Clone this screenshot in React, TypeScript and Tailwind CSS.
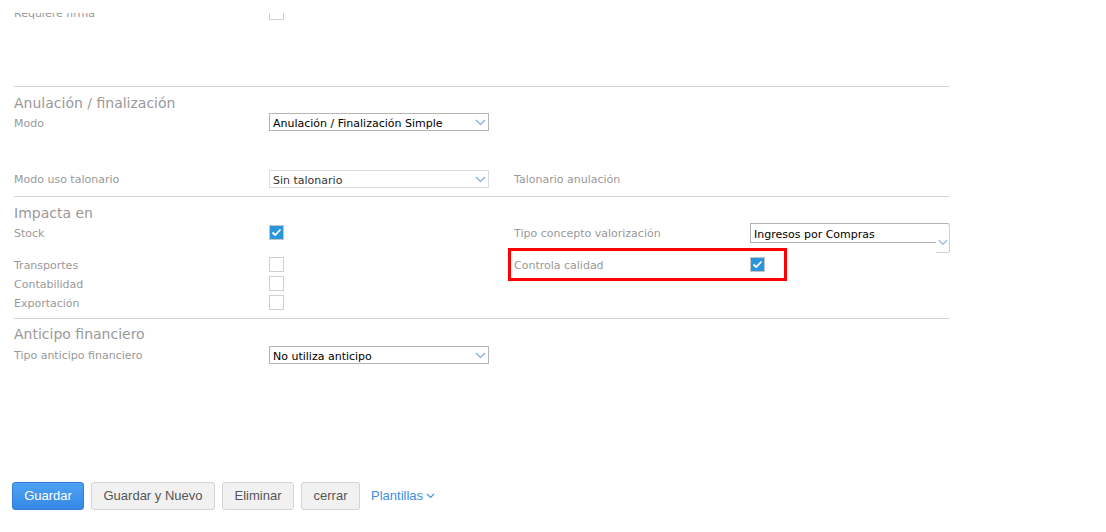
import React from "react";

const font = { fontFamily: '"DejaVu Sans", Verdana, sans-serif' };

function Chevron({ className = "" }: { className?: string }) {
  return (
    <svg width="11" height="7" viewBox="0 0 11 7" className={className}>
      <polyline points="1,1 5.5,5.5 10,1" fill="none" stroke="#7fa9dc" strokeWidth="1.2" />
    </svg>
  );
}

function Select({ value, disabled = false }: { value: string; disabled?: boolean }) {
  return (
    <div
      className={`w-[220px] h-[18px] flex items-center justify-between pl-[3px] pr-[2px] border bg-white ${
        disabled ? "border-[#dcdcdc] text-[#333]" : "border-[#b5b5b5] text-black"
      }`}
    >
      <span className="text-[11px] leading-none pt-[2px]">{value}</span>
      <Chevron />
    </div>
  );
}

function Box({ checked = false }: { checked?: boolean }) {
  return checked ? (
    <div className="w-[15px] h-[15px] border border-[#c5c5c5] bg-[#2b95d9] flex items-center justify-center">
      <svg width="11" height="9" viewBox="0 0 11 9">
        <polyline points="1.5,4.5 4.2,7 9.5,1.5" fill="none" stroke="#fff" strokeWidth="1.8" />
      </svg>
    </div>
  ) : (
    <div className="w-[15px] h-[15px] border border-[#cfcfcf] bg-white" />
  );
}

function Label({ children, low = false }: { children: React.ReactNode; low?: boolean }) {
  return (
    <span className={`text-[11px] text-[#999] leading-none ${low ? "pt-[2px]" : "pt-[1px]"}`}>
      {children}
    </span>
  );
}

function Header({ children, mt }: { children: React.ReactNode; mt: string }) {
  return (
    <div className={`${mt} h-[20px] flex items-center text-[14px] text-[#999]`}>{children}</div>
  );
}

const Line = ({ mt }: { mt: string }) => <div className={`${mt} w-[935px] border-t border-[#d3d3d3]`} />;

export default function App() {
  return (
    <div className="relative w-[1106px] h-[532px] bg-white overflow-hidden" style={font}>
      <div className="pl-[14px]">
        {/* clipped row */}
        <div className="mt-[13px] h-[8px] overflow-hidden">
          <div className="-mt-[8px] h-[15px] grid grid-cols-[255px_245px] items-center">
            <Label low>Requiere firma</Label>
            <Box />
          </div>
        </div>

        <Line mt="mt-[65px]" />
        <Header mt="mt-[6px]">Anulación / finalización</Header>
        <div className="h-[18px] grid grid-cols-[255px_245px] items-center">
          <Label low>Modo</Label>
          <Select value="Anulación / Finalización Simple" />
        </div>
        <div className="mt-[39px] h-[18px] grid grid-cols-[255px_245px_236px] items-center">
          <Label>Modo uso talonario</Label>
          <Select value="Sin talonario" disabled />
          <Label>Talonario anulación</Label>
        </div>

        <Line mt="mt-[8px]" />
        <Header mt="mt-[6px]">Impacta en</Header>
        <div className="h-[30px] grid grid-cols-[255px_245px_236px_200px] items-start">
          <div className="h-[20px] flex items-center">
            <Label>Stock</Label>
          </div>
          <div className="mt-[2px]">
            <Box checked />
          </div>
          <div className="h-[20px] flex items-center">
            <Label>Tipo concepto valorización</Label>
          </div>
          <div className="flex items-start">
            <div className="w-[186px] h-[20px] border-t border-l border-b border-[#b0b0b0] bg-white flex items-center pl-[3px] pt-[2px] text-[11px] leading-none text-black">
              Ingresos por Compras
            </div>
            <div className="w-[14px] h-[30px] border-t border-r border-b border-t-[#b0b0b0] border-r-[#d0d0d0] border-b-[#d0d0d0] rounded-r-[3px] flex items-center justify-center pt-[8px]">
              <Chevron className="w-[10px]" />
            </div>
          </div>
        </div>
        <div className="mt-[4px] h-[15px] grid grid-cols-[255px_245px_236px_200px] items-center">
          <Label low>Transportes</Label>
          <Box />
          <Label low>Controla calidad</Label>
          <Box checked />
        </div>
        <div className="mt-[4px] h-[15px] grid grid-cols-[255px_245px] items-center">
          <Label low>Contabilidad</Label>
          <Box />
        </div>
        <div className="mt-[4px] h-[15px] grid grid-cols-[255px_245px] items-center">
          <Label low>Exportación</Label>
          <Box />
        </div>

        <Line mt="mt-[8px]" />
        <Header mt="mt-[5px]">Anticipo financiero</Header>
        <div className="mt-[2px] h-[18px] grid grid-cols-[255px_245px] items-center">
          <Label>Tipo anticipo financiero</Label>
          <Select value="No utiliza anticipo" />
        </div>
      </div>

      {/* buttons */}
      <div
        className="mt-[118px] pl-[12px] flex items-center gap-[7px] text-[13px]"
        style={{ fontFamily: '"Liberation Sans", Arial, sans-serif' }}
      >
        <button className="h-[28px] w-[72px] rounded-[3px] border border-[#2f7fd8] bg-gradient-to-b from-[#4ea2f2] to-[#3688e6] text-white">
          Guardar
        </button>
        <button className="h-[28px] w-[124px] rounded-[3px] border border-[#d4d4d4] bg-[#f1f1f1] text-[#555]">
          Guardar y Nuevo
        </button>
        <button className="h-[28px] w-[72px] rounded-[3px] border border-[#d4d4d4] bg-[#f1f1f1] text-[#555]">
          Eliminar
        </button>
        <button className="h-[28px] w-[59px] rounded-[3px] border border-[#d4d4d4] bg-[#f1f1f1] text-[#555]">
          cerrar
        </button>
        <span className="ml-[4px] flex items-center gap-[3px] text-[#3b8fe4]">
          Plantillas
          <svg width="9" height="6" viewBox="0 0 9 6">
            <polyline points="1,1 4.5,4.5 8,1" fill="none" stroke="#3b8fe4" strokeWidth="1.1" />
          </svg>
        </span>
      </div>

      {/* red annotation box */}
      <div className="absolute left-[508px] top-[248px] w-[279px] h-[33px] border-[3px] border-[#ff0000]" />
    </div>
  );
}
